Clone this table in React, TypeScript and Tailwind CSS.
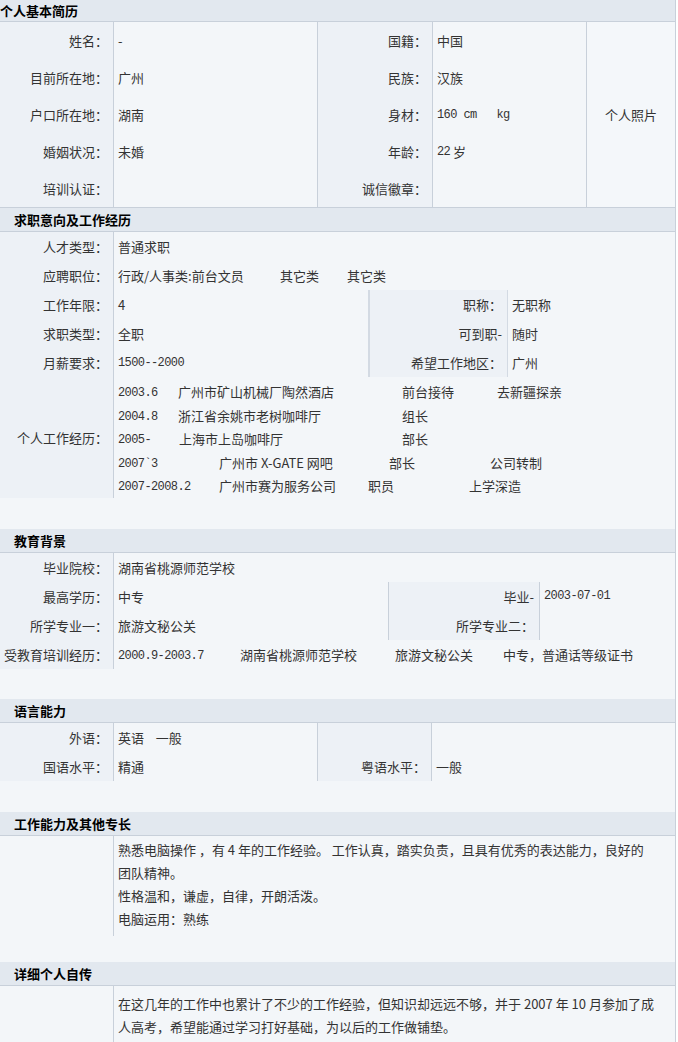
const LINE = 'border-[#c8d0da]';

function Header({ title, first }: { title: string; first?: boolean }) {
  return (
    <div
      className={`flex items-center bg-[#e2e8ef] border-b ${LINE} text-[13px] font-bold text-black ${first ? 'h-[22px] pl-0' : 'h-[24px] pl-[14px]'}`}
    >
      {title}
    </div>
  );
}

function Label({ children, className = '' }: { children?: React.ReactNode; className?: string }) {
  return (
    <div className={`flex items-center justify-end pr-[5px] bg-[#edf1f6] whitespace-nowrap ${className}`}>
      {children}
    </div>
  );
}

function Value({ children, className = '' }: { children?: React.ReactNode; className?: string }) {
  return <div className={`flex items-center pl-[4px] whitespace-nowrap ${className}`}>{children}</div>;
}

function M({ children }: { children: React.ReactNode }) {
  return <span className="font-['Liberation_Mono',monospace] text-[12px] tracking-[-0.6px]">{children}</span>;
}

const jobs: { text: string; mono?: boolean; w?: string }[][] = [
  [
    { text: '2003.6', mono: true, w: 'w-[60px]' },
    { text: '广州市矿山机械厂陶然酒店', w: 'w-[224px]' },
    { text: '前台接待', w: 'w-[95px]' },
    { text: '去新疆探亲' },
  ],
  [
    { text: '2004.8', mono: true, w: 'w-[60px]' },
    { text: '浙江省余姚市老树咖啡厅', w: 'w-[224px]' },
    { text: '组长' },
  ],
  [
    { text: '2005-', mono: true, w: 'w-[61px]' },
    { text: '上海市上岛咖啡厅', w: 'w-[223px]' },
    { text: '部长' },
  ],
  [
    { text: '2007`3', mono: true, w: 'w-[101px]' },
    { text: '广州市 X-GATE 网吧', w: 'w-[170px]' },
    { text: '部长', w: 'w-[101px]' },
    { text: '公司转制' },
  ],
  [
    { text: '2007-2008.2', mono: true, w: 'w-[101px]' },
    { text: '广州市赛为服务公司', w: 'w-[149px]' },
    { text: '职员', w: 'w-[101px]' },
    { text: '上学深造' },
  ],
];

export default function App() {
  return (
    <div className="w-[678px] bg-white font-['Noto_Sans_CJK_SC',sans-serif] text-[13px] text-[#333] leading-none">
      <div className={`w-[676px] bg-[#f3f6f9] border-r ${LINE}`}>
        {/* 个人基本简历 */}
        <Header title="个人基本简历" first />
        <div className={`grid grid-cols-[114px_204px_114px_155px_1fr] grid-rows-[repeat(5,37px)] border-b ${LINE}`}>
          <Label className={`border-r ${LINE}`}>姓名：</Label>
          <Value className={`border-r ${LINE}`}>-</Value>
          <Label>国籍：</Label>
          <Value className={`border-l ${LINE} border-r`}>中国</Value>
          <div className="row-span-5 flex items-center justify-center bg-[#f4f7fa]">个人照片</div>

          <Label className={`border-r ${LINE}`}>目前所在地：</Label>
          <Value className={`border-r ${LINE}`}>广州</Value>
          <Label>民族：</Label>
          <Value className={`border-l ${LINE} border-r`}>汉族</Value>

          <Label className={`border-r ${LINE}`}>户口所在地：</Label>
          <Value className={`border-r ${LINE}`}>湖南</Value>
          <Label>身材：</Label>
          <Value className={`border-l ${LINE} border-r`}>
            <M>160 cm&nbsp;&nbsp;&nbsp;kg</M>
          </Value>

          <Label className={`border-r ${LINE}`}>婚姻状况：</Label>
          <Value className={`border-r ${LINE}`}>未婚</Value>
          <Label>年龄：</Label>
          <Value className={`border-l ${LINE} border-r`}>
            <M>22</M>&nbsp;岁
          </Value>

          <Label className={`border-r ${LINE}`}>培训认证：</Label>
          <Value className={`border-r ${LINE}`} />
          <Label>诚信徽章：</Label>
          <Value className={`border-l ${LINE} border-r`} />
        </div>

        {/* 求职意向及工作经历 */}
        <Header title="求职意向及工作经历" />
        <div className="flex flex-col">
          <div className="grid grid-cols-[114px_254px_140px_1fr] grid-rows-[repeat(5,29px)]">
            <Label className={`border-r ${LINE}`}>人才类型：</Label>
            <Value className="col-span-3">普通求职</Value>

            <Label className={`border-r ${LINE}`}>应聘职位：</Label>
            <Value className="col-span-3">
              <span className="w-[162px]">行政/人事类:前台文员</span>
              <span className="w-[67px]">其它类</span>
              <span>其它类</span>
            </Value>

            <Label className={`border-r ${LINE}`}>工作年限：</Label>
            <Value>4</Value>
            <Label className={`border-l-2 border-[#d3dae3] border-r`}>职称：</Label>
            <Value>无职称</Value>

            <Label className={`border-r ${LINE}`}>求职类型：</Label>
            <Value>全职</Value>
            <Label className={`border-l-2 border-[#d3dae3] border-r`}>可到职-</Label>
            <Value>随时</Value>

            <Label className={`border-r ${LINE}`}>月薪要求：</Label>
            <Value>
              <M>1500--2000</M>
            </Value>
            <Label className={`border-l-2 border-[#d3dae3] border-r`}>希望工作地区：</Label>
            <Value>广州</Value>
          </div>
          <div className="grid grid-cols-[114px_1fr] pb-[1px]">
            <Label className={`border-r ${LINE}`}>个人工作经历：</Label>
            <div className="flex flex-col pl-[4px] pt-[3px]">
              {jobs.map((line, i) => (
                <div key={i} className="flex items-center h-[23.5px] whitespace-nowrap">
                  {line.map((c, j) => (
                    <span key={j} className={c.w ?? ''}>
                      {c.mono ? <M>{c.text}</M> : c.text}
                    </span>
                  ))}
                </div>
              ))}
            </div>
          </div>
          <div className="h-[30px]" />
        </div>

        {/* 教育背景 */}
        <Header title="教育背景" />
        <div className="flex flex-col">
          <div className="grid grid-cols-[114px_274px_152px_1fr] grid-rows-[repeat(4,29px)]">
            <Label className={`border-r ${LINE}`}>毕业院校：</Label>
            <Value className="col-span-3">湖南省桃源师范学校</Value>

            <Label className={`border-r ${LINE}`}>最高学历：</Label>
            <Value>中专</Value>
            <Label className={`border-l ${LINE} border-r`}>毕业-</Label>
            <Value>
              <M>2003-07-01</M>
            </Value>

            <Label className={`border-r ${LINE}`}>所学专业一：</Label>
            <Value>旅游文秘公关</Value>
            <Label className={`border-l ${LINE} border-r`}>所学专业二：</Label>
            <Value />

            <Label className={`border-r ${LINE} pr-[4px]`}>受教育培训经历：</Label>
            <Value className="col-span-3">
              <span className="w-[122px]">
                <M>2000.9-2003.7</M>
              </span>
              <span className="w-[155px]">湖南省桃源师范学校</span>
              <span className="w-[108px]">旅游文秘公关</span>
              <span>中专，普通话等级证书</span>
            </Value>
          </div>
          <div className="h-[30px]" />
        </div>

        {/* 语言能力 */}
        <Header title="语言能力" />
        <div className="flex flex-col">
          <div className="grid grid-cols-[114px_204px_114px_1fr] grid-rows-[repeat(2,29px)]">
            <Label className={`border-r ${LINE}`}>外语：</Label>
            <Value className={`border-r ${LINE}`}>英语&nbsp;&nbsp;&nbsp;&nbsp;一般</Value>
            <Label className={`border-r ${LINE}`} />
            <Value />

            <Label className={`border-r ${LINE}`}>国语水平：</Label>
            <Value className={`border-r ${LINE}`}>精通</Value>
            <Label className={`border-r ${LINE}`}>粤语水平：</Label>
            <Value>一般</Value>
          </div>
          <div className="h-[31px]" />
        </div>

        {/* 工作能力及其他专长 */}
        <Header title="工作能力及其他专长" />
        <div className="flex flex-col">
          <div className="grid grid-cols-[114px_1fr]">
            <div className={`border-r ${LINE}`} />
            <div className="flex flex-col pl-[4px] pt-[2px] pb-[6px] leading-[23px] whitespace-nowrap">
              <div>熟悉电脑操作 ，有 4 年的工作经验。 工作认真，踏实负责，且具有优秀的表达能力，良好的</div>
              <div>团队精神。</div>
              <div>性格温和，谦虚，自律，开朗活泼。</div>
              <div>电脑运用：熟练</div>
            </div>
          </div>
          <div className="h-[26px]" />
        </div>

        {/* 详细个人自传 */}
        <Header title="详细个人自传" />
        <div className="grid grid-cols-[114px_1fr]">
          <div className={`border-r ${LINE}`} />
          <div className="flex flex-col pl-[4px] pt-[6px] pb-[6px] leading-[23px] whitespace-nowrap">
            <div>在这几年的工作中也累计了不少的工作经验，但知识却远远不够，并于 2007 年 10 月参加了成</div>
            <div>人高考，希望能通过学习打好基础，为以后的工作做铺垫。</div>
          </div>
        </div>
      </div>
    </div>
  );
}
